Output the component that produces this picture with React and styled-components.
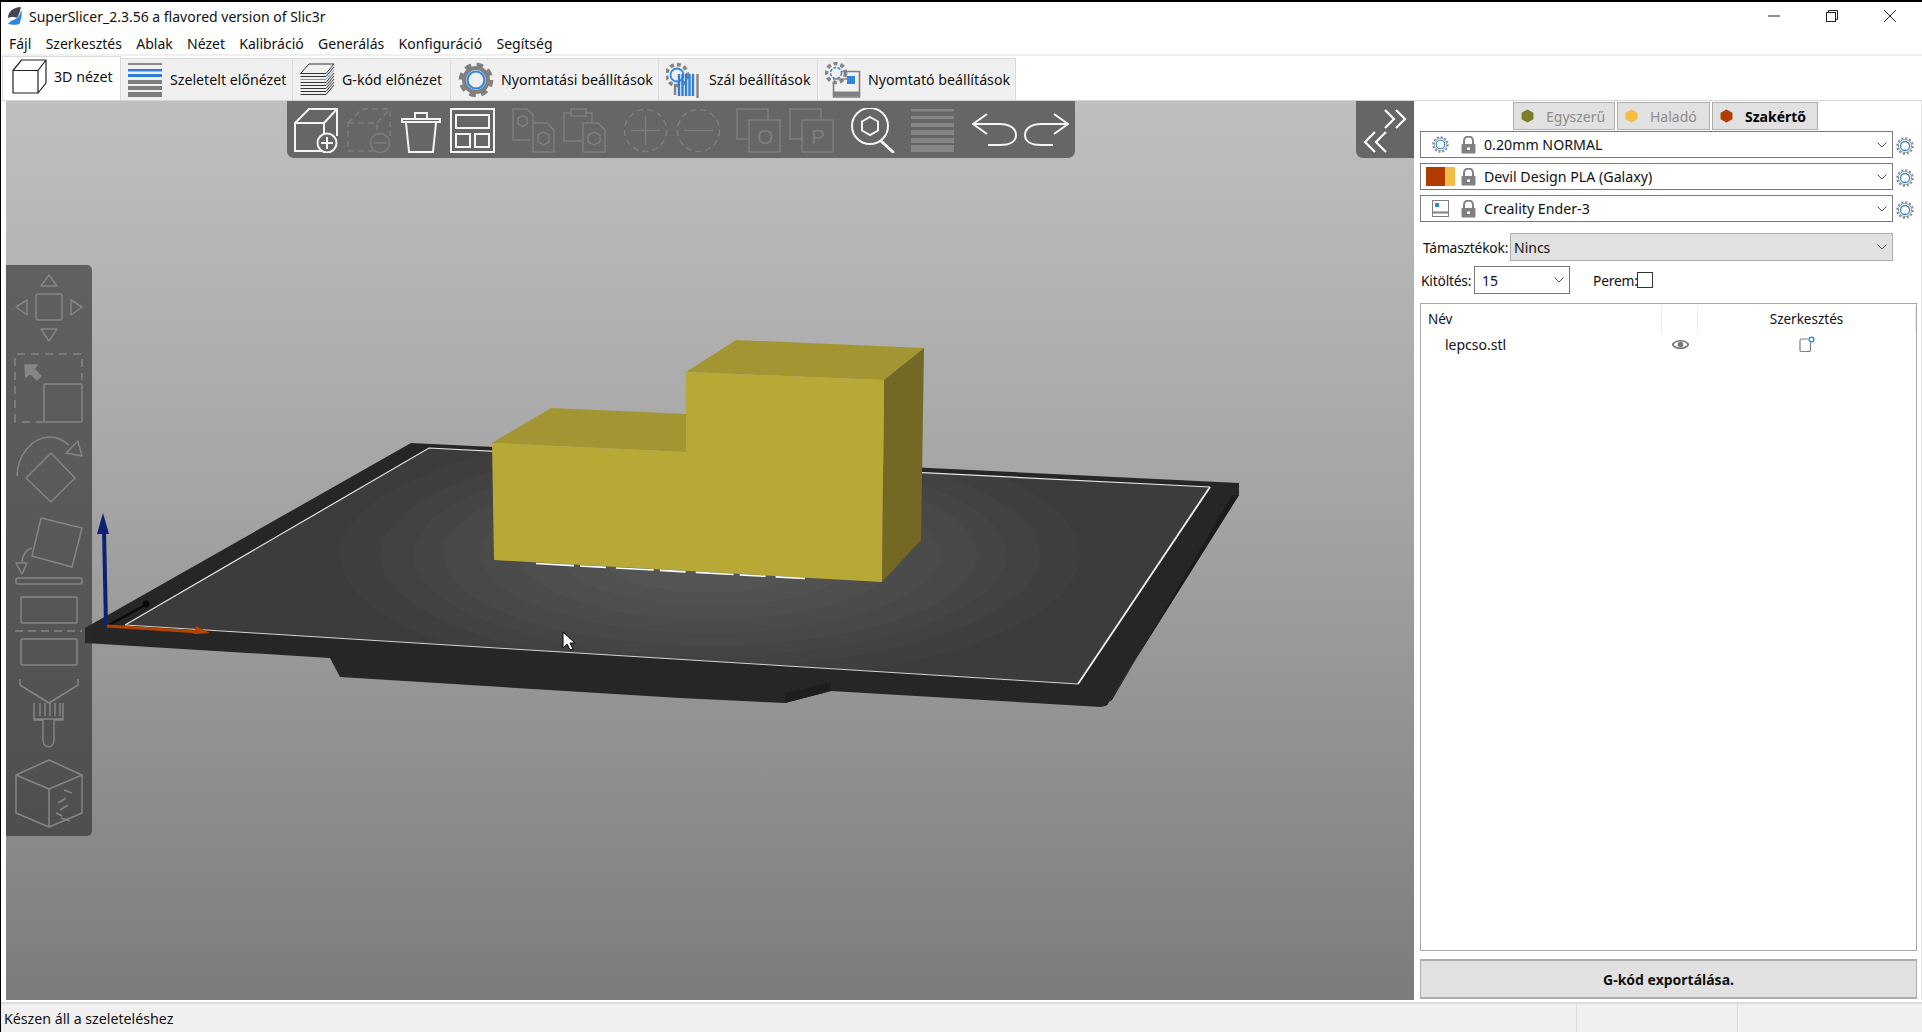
import React from 'react'
import styled, { createGlobalStyle } from 'styled-components'

const UI_FONT = '"Noto Sans", "Open Sans", sans-serif'

const GlobalStyle = createGlobalStyle`
    html, body { margin: 0; padding: 0; height: 100%; background: #fff; overflow: hidden; }
    #root { height: 100%; }
`

/* Window chrome */
const Window = styled.div`
    height: 100vh;
    box-sizing: border-box;
    border-top: 2px solid #000;
    border-left: 1px solid #000;
    display: flex;
    flex-direction: column;
    font-family: ${UI_FONT};
    font-size: 14px;
    color: #111;
    background: #fff;
`
const TitleBar = styled.div`
    height: 28px;
    flex: none;
    display: flex;
    align-items: center;
    padding-left: 6px;
`
const TitleText = styled.span`
    margin-left: 5px;
    font-size: 14px;
    white-space: nowrap;
`
const WindowButtons = styled.div`
    margin-left: auto;
    padding-right: 3px;
    display: flex;
    align-items: center;
    & svg { display: block; }
`
const WindowButton = styled.div`
    width: 58px;
    height: 28px;
    display: flex;
    align-items: center;
    justify-content: center;
`
const MenuBar = styled.div`
    height: 26px;
    flex: none;
    box-sizing: border-box;
    padding: 2px 0 0 8px;
    display: flex;
    align-items: center;
    gap: 14.3px;
    border-bottom: 2px solid #f0f0f0;
`
const MenuItem = styled.span`
    font-size: 14px;
`
const TabBar = styled.div`
    height: 45px;
    flex: none;
    box-sizing: border-box;
    display: flex;
    align-items: flex-end;
    padding-left: 1px;
    border-bottom: 1px solid #d6d6d6;
`
const Tab = styled.div`
    width: ${p => p.$w}px;
    height: ${p => (p.$active ? 44 : 42)}px;
    box-sizing: border-box;
    display: flex;
    align-items: center;
    gap: 7px;
    padding-left: ${p => (p.$active ? 9 : 7)}px;
    padding-bottom: ${p => (p.$active ? 4 : 0)}px;
    background: ${p => (p.$active ? '#fff' : '#f0f0f0')};
    border: 1px solid #dadada;
    border-left-width: ${p => (p.$active ? 1 : 0)}px;
    border-bottom-width: 0;
    white-space: nowrap;
    font-size: 14.2px;
    & svg { flex: none; }
`

/* Main area */
const Main = styled.div`
    flex: 1;
    min-height: 0;
    display: flex;
    padding-left: 5px;
`
const Viewport = styled.div`
    position: relative;
    width: 1408px;
    flex: none;
    height: 899px;
    background: linear-gradient(#bfbfbf 0%, #a4a4a4 45%, #7c7c7c 100%);
    overflow: hidden;
`
const Scene = styled.svg`
    position: absolute;
    inset: 0;
    width: 100%;
    height: 100%;
`
const TopToolbar = styled.div`
    position: absolute;
    left: 281px;
    top: 0;
    width: 788px;
    height: 57px;
    box-sizing: border-box;
    padding: 7px 0 0 6px;
    display: flex;
    background: #666;
    border-radius: 0 0 7px 7px;
`
const TopIconBox = styled.svg`
    flex: none;
    margin-left: ${p => p.$gap}px;
`
const CollapseButton = styled.div`
    position: absolute;
    right: 0;
    top: 0;
    width: 58px;
    height: 57px;
    background: #666;
    border-radius: 0 0 0 7px;
`
const SideToolbar = styled.div`
    position: absolute;
    left: 0;
    top: 164px;
    width: 86px;
    height: 571px;
    box-sizing: border-box;
    padding-top: 7px;
    display: flex;
    flex-direction: column;
    gap: 9px;
    background: rgba(40, 40, 40, 0.6);
    border-radius: 0 5px 5px 0;
`

/* Right panel */
const Panel = styled.div`
    flex: 1;
    min-width: 0;
    box-sizing: border-box;
    display: flex;
    flex-direction: column;
    padding: 1px 4px 1px 6px;
    border-right: 1px solid #e2e2e2;
`
const ModeRow = styled.div`
    display: flex;
    gap: 2px;
    margin-left: 93px;
    height: 28px;
`
const ModeButton = styled.div`
    width: ${p => p.$w}px;
    box-sizing: border-box;
    display: flex;
    align-items: center;
    gap: ${p => p.$gap}px;
    padding-left: 7px;
    background: #e1e1e1;
    border: 1px solid #adadad;
    font-size: 14px;
    font-weight: ${p => (p.$on ? 700 : 400)};
    color: ${p => (p.$on ? '#000' : '#8c8c8c')};
`
const ProfileRow = styled.div`
    display: flex;
    align-items: center;
    height: 27px;
    margin-top: ${p => p.$top}px;
`
const Combo = styled.div`
    width: 473px;
    height: 27px;
    box-sizing: border-box;
    display: flex;
    align-items: center;
    position: relative;
    border: 1px solid #7a7a7a;
    font-size: 14.2px;
`
const ComboIcon = styled.div`
    width: 30px;
    margin: 0 6px 0 4px;
    flex: none;
    display: flex;
    justify-content: center;
`
const ComboLock = styled.div`
    width: 15px;
    flex: none;
    margin-right: 8px;
    display: flex;
`
const ChevronBox = styled.svg`
    margin-left: auto;
    margin-right: ${p => p.$right}px;
    flex: none;
`
const GearSlot = styled.div`
    margin-left: 3px;
    display: flex;
    padding-top: 2px;
`
const FormRow = styled.div`
    display: flex;
    align-items: center;
    margin-top: ${p => p.$top}px;
    height: 28px;
`
const FormLabel = styled.span`
    margin-left: ${p => p.$left}px;
    padding-top: 1px;
    font-size: 13.8px;
    letter-spacing: -0.2px;
    white-space: nowrap;
    width: ${p => p.$w}px;
`
const Select = styled.div`
    width: ${p => p.$w}px;
    height: 28px;
    box-sizing: border-box;
    display: flex;
    align-items: center;
    padding-left: ${p => p.$pad}px;
    background: ${p => (p.$filled ? '#e1e1e1' : '#fff')};
    border: 1px solid ${p => (p.$filled ? '#adadad' : '#7a7a7a')};
    font-size: 14px;
`
const CheckBox = styled.div`
    width: 16px;
    height: 16px;
    box-sizing: border-box;
    border: 1px solid #333;
    background: #fff;
`
const ListBox = styled.div`
    flex: 1;
    min-height: 0;
    margin-top: 9px;
    border: 1px solid #a8a8a8;
`
const ListHead = styled.div`
    height: 26px;
    display: grid;
    grid-template-columns: 241px 36px 1fr;
    align-items: center;
    padding-top: 2px;
    box-sizing: content-box;
    font-size: 13.5px;
`
const HeadCell = styled.div`
    height: 100%;
    display: flex;
    align-items: center;
    padding-left: ${p => p.$pad || 0}px;
    justify-content: ${p => (p.$center ? 'center' : 'flex-start')};
    border-right: 1px solid #ececec;
`
const ListRow = styled.div`
    display: grid;
    grid-template-columns: 241px 36px 1fr;
    align-items: center;
    height: 24px;
    font-size: 14px;
`
const RowCell = styled.div`
    display: flex;
    align-items: center;
    padding-left: ${p => p.$pad || 0}px;
    justify-content: ${p => (p.$center ? 'center' : 'flex-start')};
`
const ExportButton = styled.div`
    margin-top: 8px;
    height: 40px;
    flex: none;
    box-sizing: border-box;
    display: flex;
    align-items: center;
    justify-content: center;
    background: #e1e1e1;
    border: 1px solid #adadad;
    border-width: 2px 1px;
    font-size: 14px;
    font-weight: 700;
`

/* Status bar */
const StatusBar = styled.div`
    margin-top: 2px;
    height: 30px;
    flex: none;
    box-sizing: border-box;
    display: flex;
    border-top: 2px solid #dcdcdc;
    background: #f0f0f0;
    font-size: 14.2px;
`
const StatusText = styled.div`
    flex: 1;
    padding: 1px 0 0 3px;
    display: flex;
    align-items: center;
`
const StatusCell = styled.div`
    width: ${p => p.$w}px;
    flex: none;
    border-left: 1px solid #dcdcdc;
`

/* Drawings */
const Gear = ({ size = 18 }) => (
    <svg width={size} height={size} viewBox="0 0 20 20" fill="none">
        <circle cx="10" cy="10" r="8.6" stroke="#8a8a8a" strokeWidth="2.2" strokeDasharray="2.4 2.1" />
        <circle cx="10" cy="10" r="7.3" stroke="#949494" strokeWidth="1" />
        <circle cx="10" cy="10" r="5" stroke="#2f86de" strokeWidth="1.4" />
    </svg>
)

const Lock = () => (
    <svg width="15" height="18" viewBox="0 0 15 18">
        <path d="M3 8V5a4.5 4.5 0 0 1 9 0v3" fill="none" stroke="#808080" strokeWidth="2" />
        <rect x="0.5" y="8" width="14" height="9.5" rx="1" fill="#808080" />
        <rect x="6" y="11.5" width="3" height="2.4" fill="#fff" />
    </svg>
)

const Chevron = ({ right = 5 }) => (
    <ChevronBox $right={right} width="10" height="6" viewBox="0 0 10 6">
        <path d="M0.5 0.5 5 5l4.5-4.5" fill="none" stroke="#555" strokeWidth="1" />
    </ChevronBox>
)

const Hex = ({ color }) => (
    <svg width="13" height="14" viewBox="0 0 12 13" style={{ flex: 'none' }}>
        <polygon points="6,0.5 11.5,3.5 11.5,9.5 6,12.5 0.5,9.5 0.5,3.5" fill={color} />
    </svg>
)

const CubeIcon = () => (
    <svg width="35" height="35" viewBox="0 0 35 35" fill="none" stroke="#222" strokeWidth="1.2">
        <path d="M1 11.5V34H26V11.5H1ZM1 11.5 9.5 1H34V24L26 34M26 11.5 34 1" />
    </svg>
)
const SliceIcon = () => (
    <svg width="35" height="34" viewBox="0 0 35 34">
        <rect x="0" y="0" width="34" height="2" fill="#8a8a8a" />
        <rect x="0" y="6" width="34" height="2.5" fill="#2f7fd8" />
        <rect x="0" y="11" width="34" height="3" fill="#2f7fd8" />
        <rect x="0" y="17" width="34" height="4" fill="#7f7f7f" />
        <rect x="0" y="23" width="34" height="4" fill="#7f7f7f" />
        <rect x="0" y="29" width="34" height="5" fill="#7f7f7f" />
    </svg>
)
const StackIcon = () => (
    <svg width="35" height="34" viewBox="0 0 35 34" fill="none" stroke="#333" strokeWidth="1">
        <path d="M0.5 10.5 9 1H34" />
        <path d="M0.5 10.5H26L34 1" />
        <path d="M0.5 13.5H26L34 4" />
        <path d="M0.5 16.5H26L34 7" stroke="#5aa2e6" />
        <path d="M0.5 19.5H26L34 10" />
        <path d="M0.5 22.5H26L34 13" />
        <path d="M0.5 25.5H26L34 16" />
        <path d="M0.5 28.5H26L34 19" />
        <path d="M0.5 31.5H26L34 22" />
    </svg>
)
const PrintGear = () => (
    <svg width="36" height="36" viewBox="0 0 35 36" fill="none">
        <circle cx="17.5" cy="18" r="15" stroke="#808080" strokeWidth="4.5" strokeDasharray="6.5 5.3" />
        <circle cx="17.5" cy="18" r="12" stroke="#808080" strokeWidth="4" />
        <circle cx="17.5" cy="18" r="8.5" stroke="#2f86de" strokeWidth="2.2" />
    </svg>
)
const FilamentGear = () => (
    <svg width="36" height="36" viewBox="0 0 36 36" fill="none">
        <circle cx="11" cy="13" r="10.5" stroke="#858585" strokeWidth="3.6" strokeDasharray="4 3" />
        <circle cx="11" cy="13" r="6.5" stroke="#2f86de" strokeWidth="1.8" />
        <path d="M13 12V34M16.500 12V34M20 12V34M23.500 12V34M27 12V34" stroke="#2f7fd8" strokeWidth="2.4" />
        <path d="M9 22V33M31.500 12V36" stroke="#858585" strokeWidth="2.4" />
    </svg>
)
const PrinterGear = () => (
    <svg width="36" height="36" viewBox="0 0 36 36" fill="none">
        <circle cx="11" cy="11" r="9.5" stroke="#858585" strokeWidth="3.6" strokeDasharray="4 3" />
        <circle cx="11" cy="11" r="5.5" stroke="#2f86de" strokeWidth="1.5" strokeDasharray="3 1.5" />
        <path d="M16 9.500H34.500V35H8.500V20" stroke="#808080" strokeWidth="1.6" />
        <path d="M8.500 32H34.500" stroke="#808080" strokeWidth="5" />
        <rect x="22" y="14" width="8" height="8" fill="#2f86de" />
        <path d="M8 17H22" stroke="#808080" strokeWidth="1.4" />
    </svg>
)

/* Top toolbar icons: 45x45, drawn white when enabled and dim when not */
const TopIcon = ({ children, on, gap }) => (
    <TopIconBox $gap={gap} width="45" height="45" viewBox="0 0 45 45" fill="none" strokeWidth={on ? 2 : 1.5}
        stroke={on ? '#f4f4f4' : '#7e7e7e'}>
        {children}
    </TopIconBox>
)
const DimText = styled.text`
    font-family: "Liberation Sans", sans-serif;
    font-size: 21px;
    fill: #7e7e7e;
    stroke: none;
`
const TopIcons = [
    { on: true, gap: 0, draw: <><path d="M2 15H31V43H2ZM2 15 16 1H44V28M31 15 44 1" /><circle cx="34" cy="35" r="9.5" fill="#666" /><path d="M34 29V41M28 35H40" /></> },
    { on: false, gap: 8, draw: <g strokeDasharray="6 4"><path d="M2 15H31V43H2ZM2 15 16 1H44V28M31 15 44 1" /><circle cx="34" cy="35" r="9.5" strokeDasharray="none" fill="#666" /><path d="M28 35H40" strokeDasharray="none" /></g> },
    { on: true, gap: 9, draw: <><path d="M2 11H40V14H2ZM15 11V5H27V11M6 15 9 44H33L36 15" /></> },
    { on: true, gap: 5, draw: <><rect x="1" y="1" width="43" height="43" /><rect x="6" y="7" width="33" height="13" /><rect x="6" y="26" width="14" height="13" /><rect x="25" y="26" width="14" height="13" /></> },
    { on: false, gap: 16, draw: <><path d="M19 32H2V1H16L22 7V14" /><path d="M7 10 11.5 7.5 16 10V16L11.5 18.5 7 16Z" /><path d="M22 15H36L43 22V44H22Z" /><path d="M27 27 32.5 24 38 27V34L32.5 37 27 34Z" /></> },
    { on: false, gap: 6, draw: <><path d="M20 33H2V5H9M24 5H30V14" /><path d="M9 1H24V8H9Z" /><path d="M21 15H36L43 22V44H21Z" /><path d="M26 27 32 24 38 27V34L32 37 26 34Z" /></> },
    { on: false, gap: 16, draw: <><circle cx="22.5" cy="22.5" r="21" strokeDasharray="6 4" /><path d="M22.5 8V37M8 22.5H37" /></> },
    { on: false, gap: 8, draw: <><circle cx="22.5" cy="22.5" r="21" strokeDasharray="6 4" /><path d="M8 22.5H37" /></> },
    { on: false, gap: 15, draw: <><path d="M14 31H1V1H32V12" /><rect x="13" y="12" width="31" height="32" /><DimText x="21" y="36">O</DimText></> },
    { on: false, gap: 8, draw: <><path d="M14 31H1V1H32V12" /><rect x="13" y="12" width="31" height="32" /><DimText x="22" y="36">P</DimText></> },
    { on: true, gap: 16, draw: <><circle cx="20" cy="18" r="18" /><path d="M20 9 28 13.5V22.5L20 27 12 22.5V13.5Z" /><path d="M31 33 43 44" strokeWidth="3" strokeLinecap="round" /></> },
    { on: false, gap: 16, draw: <g fill="#858585" stroke="none"><rect x="0" y="1" width="43" height="2.5" /><rect x="0" y="8" width="43" height="3" /><rect x="0" y="15" width="43" height="4" /><rect x="0" y="22" width="43" height="5" /><rect x="0" y="30" width="43" height="5" /><rect x="0" y="37" width="43" height="7" /></g> },
    { on: true, gap: 16, draw: <path d="M15 6 1 16 15 26M1 16H28C37 16 44 20 44 27S37 37 28 37H16" /> },
    { on: true, gap: 7, draw: <path d="M30 6 44 16 30 26M44 16H17C8 16 1 20 1 27S8 37 17 37H29" /> },
]

/* Side toolbar icons use the page's own coordinates for x, with a shifted y window */
const SideIcon = ({ top, children }) => (
    <svg width="86" height="72" viewBox={`6 ${top} 86 72`} fill="none" stroke="#858585" strokeWidth="1.5"
        strokeLinejoin="round" style={{ display: 'block', flex: 'none' }}>
        {children}
    </svg>
)
const SideIcons = [
    {
        top: 272, draw: <>
            <path d="M49 275 57 286H41Z" /><path d="M49 341 41 329H57Z" /><path d="M16 307 27 300V315Z" /><path d="M82 307 71 300V315Z" />
            <rect x="36" y="294" width="26" height="26" rx="2" />
        </>,
    },
    {
        top: 353, draw: <>
            <path d="M15 422V354H82V380M44 422H15" strokeDasharray="8 6" />
            <rect x="44" y="384" width="38" height="38" rx="1" />
            <path d="M25 365H37L34 369 41 376 37 380 30 373 26 377Z" fill="#858585" />
        </>,
    },
    {
        top: 434, draw: <>
            <path d="M51 453 75 478 51 502 26 478Z" />
            <path d="M17 476C17 456 32 437 50 437 58 437 62 440 69 445" />
            <path d="M66 453 78 441 82 456Z" />
        </>,
    },
    {
        top: 515, draw: <>
            <path d="M41 518 82 528 72 567 32 556Z" />
            <path d="M32 548C27 549 22 555 22 563" />
            <path d="M16 563H27L22 574Z" />
            <rect x="16" y="578" width="66" height="6" rx="2" />
        </>,
    },
    {
        top: 596, draw: <>
            <rect x="21" y="597" width="56" height="26" rx="1" />
            <path d="M15 631H82" strokeDasharray="8 5" />
            <rect x="21" y="639" width="56" height="26" rx="1" />
        </>,
    },
    {
        top: 677, draw: <>
            <path d="M20 679V685L49 703 78 685V679" />
            <path d="M34 703V720H43V740C43 749 54 749 54 740V720H63V703M34 719H63M40 703V716M45 703V716M50 703V716M55 703V716M60 703V716" />
        </>,
    },
    {
        top: 758, draw: <>
            <path d="M49 760 82 775V813L49 827 16 813V775ZM16 775 49 789 82 775M49 789V827" />
            <path d="M64 790 72 793M66 798 58 803M68 805 60 810M56 813 62 816M61 818 70 821" />
        </>,
    },
]

const App = () => {
    const menus = ['Fájl', 'Szerkesztés', 'Ablak', 'Nézet', 'Kalibráció', 'Generálás', 'Konfiguráció', 'Segítség']
    const tabs = [
        { w: 119, label: '3D nézet', icon: <CubeIcon />, active: true },
        { w: 172, label: 'Szeletelt előnézet', icon: <SliceIcon /> },
        { w: 158, label: 'G-kód előnézet', icon: <StackIcon /> },
        { w: 208, label: 'Nyomtatási beállítások', icon: <PrintGear /> },
        { w: 159, label: 'Szál beállítások', icon: <FilamentGear /> },
        { w: 198, label: 'Nyomtató beállítások', icon: <PrinterGear /> },
    ]

    return (
        <Window>
            <GlobalStyle />
            <TitleBar>
                <svg width="17" height="19" viewBox="0 0 17 19">
                    <path d="M14 0C6 0 1 5 1 11c3-1.500 7-1 9 0 2-3 3-7 4-11Z" fill="#45494f" />
                    <path d="M14.500 3c1 5-1 11-2 14-2 1-8 1-11.500 0 2-3 5-4 8-5 3-2 4.500-6 5.500-9Z" fill="#2f86de" />
                </svg>
                <TitleText>SuperSlicer_2.3.56 a flavored version of Slic3r</TitleText>
                <WindowButtons>
                    <WindowButton>
                        <svg width="12" height="2" viewBox="0 0 12 2"><path d="M0 1H12" stroke="#222" /></svg>
                    </WindowButton>
                    <WindowButton>
                        <svg width="12" height="12" viewBox="0 0 12 12" fill="none" stroke="#222">
                            <rect x="0.5" y="2.5" width="9" height="9" /><path d="M2.5 2.5V0.5H11.5V9.5H9.5" />
                        </svg>
                    </WindowButton>
                    <WindowButton>
                        <svg width="12" height="12" viewBox="0 0 12 12" stroke="#222"><path d="M0 0 12 12M12 0 0 12" /></svg>
                    </WindowButton>
                </WindowButtons>
            </TitleBar>
            <MenuBar>
                {menus.map(m => <MenuItem key={m}>{m}</MenuItem>)}
            </MenuBar>
            <TabBar>
                {tabs.map(t => (
                    <Tab key={t.label} $w={t.w} $active={t.active}>
                        {t.icon}
                        <span>{t.label}</span>
                    </Tab>
                ))}
            </TabBar>
            <Main>
                <Viewport>
                    <Scene viewBox="6 101 1408 899">
                        <polygon points="85,628 411,443 1239,483 1239,495 1107,705 1101,707 831,691 785,703 680,698 340,677 330,658 85,643" fill="#262626" />
                        <polygon points="1239,495 1107,705 1101,707 1112,700 1232,495" fill="#1c1c1c" />
                        <polygon points="785,703 831,691 831,682 785,693" fill="#1e1e1e" />
                        <polygon points="429,448 1210,487 1078,684 125,625" fill="#3c3c3c" />
                        <clipPath id="bed"><polygon points="429,448 1210,487 1078,684 125,625" /></clipPath>
                        <g clipPath="url(#bed)">
                            {[[370, '#3f3f3f'], [330, '#424242'], [297, '#454545'], [267, '#484848'], [230, '#4b4b4b'], [190, '#4e4e4e'], [150, '#515151'], [110, '#545454']].map(([rx, fill]) => (
                                <ellipse key={rx} cx="710" cy="555" rx={rx} ry={rx * 0.34} fill={fill} />
                            ))}
                        </g>
                        <path d="M1078 684 125 625" fill="none" stroke="#d4d4d4" strokeWidth="1" />
                        <path d="M125 625 429 448 1210 487" fill="none" stroke="#e4e4e4" strokeWidth="1.2" />
                        <path d="M1210 487 1078 684" fill="none" stroke="#f2f2f2" strokeWidth="1.8" />
                        <polygon points="492,443 551,408 686,414 686,452" fill="#a39632" />
                        <polygon points="686,372 736,340 924,348 884,380" fill="#a39632" />
                        <polygon points="884,380 924,348 921,540 882,582" fill="#746924" />
                        <polygon points="492,443 686,452 686,372 884,380 882,582 494,560" fill="#b8a937" />
                        <path d="M536 563.5 805 578.5" stroke="#fff" strokeWidth="1.6" strokeDasharray="38 6 26 10" />
                        <path d="M109 625 147 604" stroke="#0a0a0a" strokeWidth="2.5" />
                        <circle cx="146" cy="604" r="3.5" fill="#0a0a0a" />
                        <path d="M106 626 104 530" stroke="#0d2073" strokeWidth="4" />
                        <polygon points="103,513 97,534 109,534" fill="#0d2073" />
                        <path d="M107 626 200 632" stroke="#b34300" strokeWidth="3" />
                        <polygon points="196,626 210,633 194,634" fill="#b34300" />
                        <polygon points="563,632 563,648 567,644 570,650 573,649 570,643 575,643" fill="#fff" stroke="#000" strokeWidth="1" />
                    </Scene>
                    <TopToolbar>
                        {TopIcons.map((ic, i) => <TopIcon key={i} on={ic.on} gap={ic.gap}>{ic.draw}</TopIcon>)}
                    </TopToolbar>
                    <CollapseButton>
                        <svg width="58" height="57" viewBox="0 0 58 57" fill="none" stroke="#fff" strokeWidth="2.2">
                            <path d="M29 9 38 18 29 27M40 9 49 18 40 27M19 31 9 41 19 51M30 31 20 41 30 51" />
                        </svg>
                    </CollapseButton>
                    <SideToolbar>
                        {SideIcons.map(ic => <SideIcon key={ic.top} top={ic.top}>{ic.draw}</SideIcon>)}
                    </SideToolbar>
                </Viewport>
                <Panel>
                    <ModeRow>
                        <ModeButton $w={102} $gap={12}><Hex color="#7d7d2a" />Egyszerű</ModeButton>
                        <ModeButton $w={93} $gap={12}><Hex color="#f4bd46" />Haladó</ModeButton>
                        <ModeButton $w={106} $gap={12} $on><Hex color="#b23c00" />Szakértő</ModeButton>
                    </ModeRow>
                    <ProfileRow $top={1}>
                        <Combo>
                            <ComboIcon><Gear size={17} /></ComboIcon>
                            <ComboLock><Lock /></ComboLock>
                            0.20mm NORMAL
                            <Chevron />
                        </Combo>
                        <GearSlot><Gear /></GearSlot>
                    </ProfileRow>
                    <ProfileRow $top={5}>
                        <Combo>
                            <ComboIcon>
                                <svg width="29" height="19" viewBox="0 0 29 19">
                                    <rect width="19" height="19" fill="#b23c00" />
                                    <rect x="19" width="10" height="19" fill="#f4bd46" />
                                </svg>
                            </ComboIcon>
                            <ComboLock><Lock /></ComboLock>
                            Devil Design PLA (Galaxy)
                            <Chevron />
                        </Combo>
                        <GearSlot><Gear /></GearSlot>
                    </ProfileRow>
                    <ProfileRow $top={5}>
                        <Combo>
                            <ComboIcon>
                                <svg width="17" height="17" viewBox="0 0 17 17" fill="none" stroke="#808080">
                                    <rect x="0.5" y="0.5" width="16" height="16" />
                                    <path d="M0.5 12.5H16.5" strokeWidth="2" />
                                    <rect x="3" y="3" width="4" height="4" fill="#2f86de" stroke="none" />
                                </svg>
                            </ComboIcon>
                            <ComboLock><Lock /></ComboLock>
                            Creality Ender-3
                            <Chevron />
                        </Combo>
                        <GearSlot><Gear /></GearSlot>
                    </ProfileRow>
                    <FormRow $top={11}>
                        <FormLabel $left={3} $w={87}>Támasztékok:</FormLabel>
                        <Select $w={383} $pad={3} $filled>
                            Nincs
                            <Chevron />
                        </Select>
                    </FormRow>
                    <FormRow $top={5}>
                        <FormLabel $left={1} $w={53}>Kitöltés:</FormLabel>
                        <Select $w={96} $pad={7}>
                            15
                            <Chevron />
                        </Select>
                        <FormLabel $left={23} $w={44}>Perem:</FormLabel>
                        <CheckBox />
                    </FormRow>
                    <ListBox>
                        <ListHead>
                            <HeadCell $pad={7}>Név</HeadCell>
                            <HeadCell />
                            <HeadCell $center>Szerkesztés</HeadCell>
                        </ListHead>
                        <ListRow>
                            <RowCell $pad={24}>lepcso.stl</RowCell>
                            <RowCell $center>
                                <svg width="17" height="11" viewBox="0 0 17 11">
                                    <path d="M0.5 5.5C4 0.5 13 0.5 16.5 5.5 13 10.5 4 10.5 0.5 5.5Z" fill="none" stroke="#777" strokeWidth="1.6" />
                                    <circle cx="8.5" cy="5.5" r="2.8" fill="#777" />
                                </svg>
                            </RowCell>
                            <RowCell $center>
                                <svg width="16" height="16" viewBox="0 0 16 16" fill="none">
                                    <path d="M9 3H2.5C1.5 3 1 3.5 1 4.5V14C1 15 1.5 15.5 2.5 15.5H10C11 15.5 11.5 15 11.5 14V7" stroke="#808080" strokeWidth="1.2" />
                                    <circle cx="12.5" cy="3.5" r="2.4" stroke="#2f86de" strokeWidth="1.4" />
                                </svg>
                            </RowCell>
                        </ListRow>
                    </ListBox>
                    <ExportButton>G-kód exportálása.</ExportButton>
                </Panel>
            </Main>
            <StatusBar>
                <StatusText>Készen áll a szeleteléshez</StatusText>
                <StatusCell $w={160} />
                <StatusCell $w={184} />
            </StatusBar>
        </Window>
    )
}

export default App
